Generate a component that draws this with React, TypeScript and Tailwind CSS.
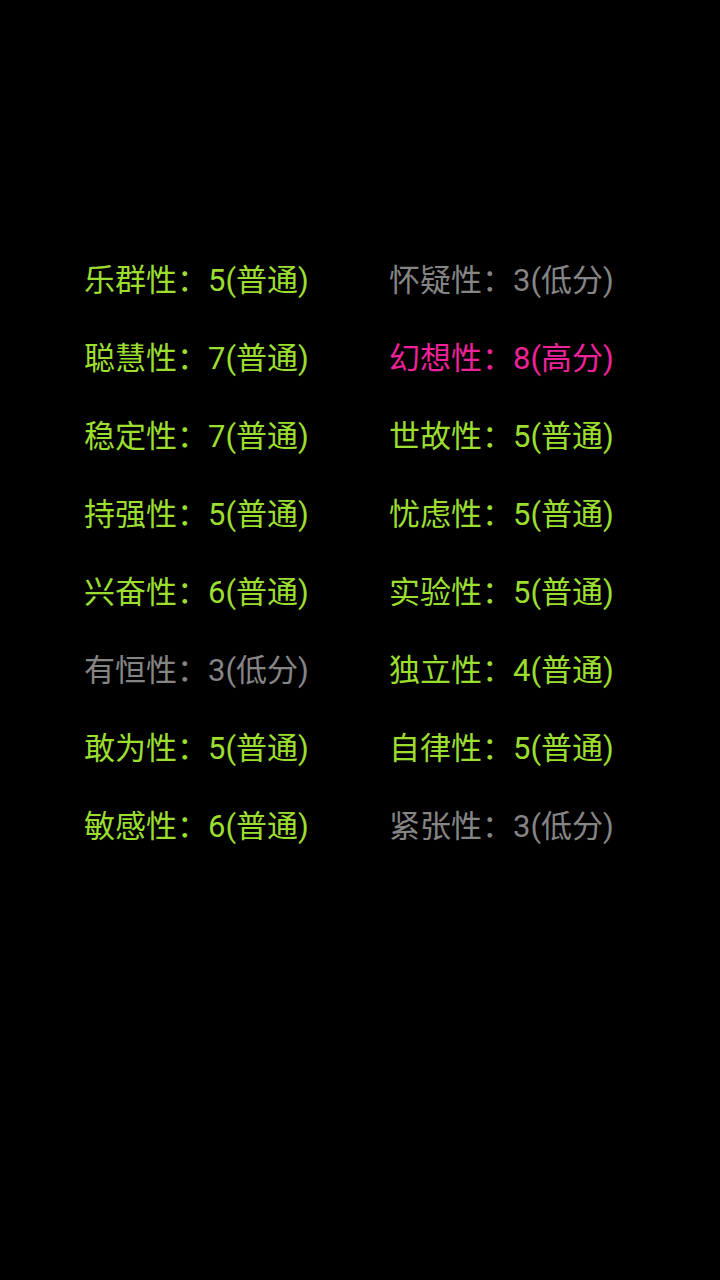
const items: { text: string; level: 'mid' | 'low' | 'high' }[] = [
  { text: '乐群性：5(普通)', level: 'mid' },
  { text: '怀疑性：3(低分)', level: 'low' },
  { text: '聪慧性：7(普通)', level: 'mid' },
  { text: '幻想性：8(高分)', level: 'high' },
  { text: '稳定性：7(普通)', level: 'mid' },
  { text: '世故性：5(普通)', level: 'mid' },
  { text: '持强性：5(普通)', level: 'mid' },
  { text: '忧虑性：5(普通)', level: 'mid' },
  { text: '兴奋性：6(普通)', level: 'mid' },
  { text: '实验性：5(普通)', level: 'mid' },
  { text: '有恒性：3(低分)', level: 'low' },
  { text: '独立性：4(普通)', level: 'mid' },
  { text: '敢为性：5(普通)', level: 'mid' },
  { text: '自律性：5(普通)', level: 'mid' },
  { text: '敏感性：6(普通)', level: 'mid' },
  { text: '紧张性：3(低分)', level: 'low' },
]

// score level -> text colour
const levelColors = {
  mid: 'text-[#9cde30]',
  low: 'text-[#858585]',
  high: 'text-[#ee2299]',
}

export default function App() {
  return (
    <div className="min-h-[1280px] w-[720px] bg-black pt-[242px] pl-[84px] font-['Roboto','Noto_Sans_CJK_SC',sans-serif]">
      <div className="grid grid-cols-[305px_305px]">
        {items.map((it) => (
          <div key={it.text} className={`h-[78px] leading-[78px] text-[31px] whitespace-nowrap ${levelColors[it.level]}`}>
            {it.text}
          </div>
        ))}
      </div>
    </div>
  )
}
